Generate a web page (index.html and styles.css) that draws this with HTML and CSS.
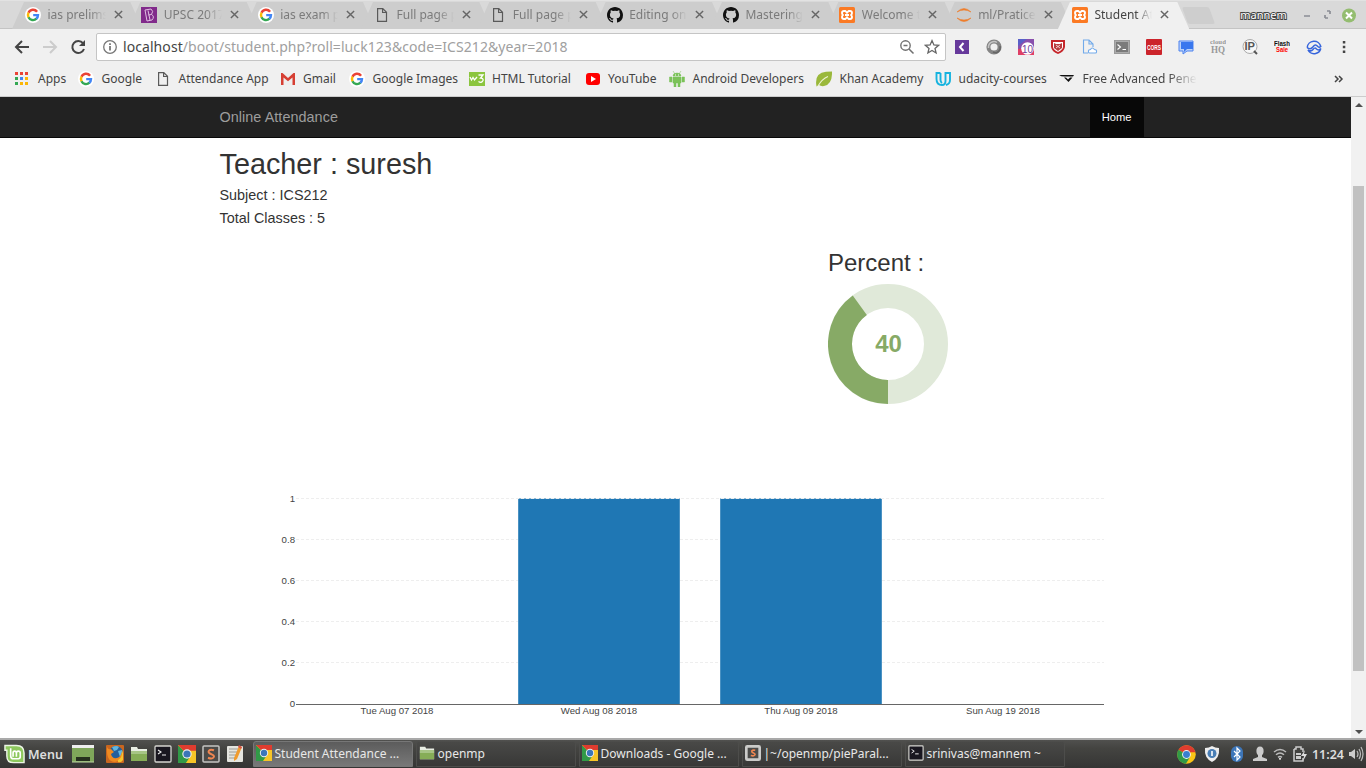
FILE: index.html
```html
<!DOCTYPE html>
<html lang="en">
<head>
<meta charset="utf-8">
<title>Student Attendance</title>
<link rel="stylesheet" href="styles.css">
</head>
<body>
<svg class="defs" width="0" height="0" aria-hidden="true">
  <symbol id="google" viewBox="0 0 16 16"><circle cx="8" cy="8" r="8" fill="#fff"/><g fill="none" stroke-width="2.4"><path d="M12.1 4.7A5 5 0 0 0 3.5 5.8" stroke="#ea4335"/><path d="M3.6 5.6a5 5 0 0 0 0 4.8" stroke="#fbbc05"/><path d="M3.5 10.2a5 5 0 0 0 8 1.5" stroke="#34a853"/><path d="M8.2 8.1H13a5 5 0 0 1-1.7 3.8" stroke="#4285f4"/></g></symbol>
  <symbol id="page" viewBox="0 0 16 16"><path d="M3.600 1.600h5.200l3.700 3.700v9.100H3.600zM8.600 1.800v3.700h3.800" fill="none" stroke="#5a5a5a" stroke-width="1.200"/></symbol>
  <symbol id="github" viewBox="0 0 16 16"><path fill="#111" fill-rule="evenodd" d="M8 0C3.58 0 0 3.58 0 8c0 3.54 2.29 6.53 5.47 7.59.4.07.55-.17.55-.38v-1.5c-2.01.37-2.53-.49-2.69-.94-.09-.23-.48-.94-.82-1.13-.28-.15-.68-.52-.01-.53.63-.01 1.08.58 1.23.82.72 1.21 1.87.87 2.33.66.07-.52.28-.87.51-1.07-1.78-.2-3.64-.89-3.64-3.95 0-.87.31-1.59.82-2.15-.08-.2-.36-1.02.08-2.12 0 0 .67-.21 2.2.82a7.6 7.6 0 0 1 4 0c1.53-1.04 2.2-.82 2.2-.82.44 1.1.16 1.92.08 2.12.51.56.82 1.27.82 2.15 0 3.07-1.87 3.75-3.65 3.95.29.25.54.73.54 1.48v2.2c0 .21.15.46.55.38A8 8 0 0 0 16 8c0-4.42-3.58-8-8-8z"/></symbol>
  <symbol id="xampp" viewBox="0 0 16 16"><rect width="16" height="16" rx="1.5" fill="#fb7a24"/><path d="M5 4h1.500L8 5.800 9.500 4H11q2 0 2 2 0 1.200-1 2 1 .8 1 2 0 2-2 2H9.500L8 10.200 6.500 12H5q-2 0-2-2 0-1.200 1-2-1-.8-1-2 0-2 2-2zM6 8h4" fill="none" stroke="#fff" stroke-width="1.900" stroke-linejoin="round"/></symbol>
  <symbol id="chrome" viewBox="0 0 16 16"><circle cx="8" cy="8" r="7.800" fill="#fbc516"/><path d="M8 8 1.200 4.100A7.800 7.800 0 0 1 14.800 4.200z" fill="#df3c2f"/><path d="M8 8 1.200 4.100A7.800 7.800 0 0 0 7.500 15.800l3.700-6.100z" fill="#319a47"/><path d="M8 4.200h6.800l.8 2H8z" fill="#df3c2f"/><circle cx="8" cy="8" r="3.700" fill="#f3f3f3"/><circle cx="8" cy="8" r="2.900" fill="#397fd0"/></symbol>
  <symbol id="chromesq" viewBox="0 0 16 16"><path d="M0 0h16v16H0z" fill="#f7c527"/><path d="m0 0 8 8 3 2-4 6H0z" fill="#319a47"/><path d="M0 0h16v5H8v3z" fill="#df3c2f"/><circle cx="8" cy="8" r="4.200" fill="#eee"/><circle cx="8" cy="8" r="3.200" fill="#3b76b8"/></symbol>
  <symbol id="folder" viewBox="0 0 18 16"><path d="M1 1h6l1 2h9v12H1z" fill="#e9eee4"/><path d="M1 5h16v10H1z" fill="#86ad57"/><path d="M1 5h16v3H1z" fill="#a7c586"/></symbol>
  <symbol id="term" viewBox="0 0 18 18"><rect x="1" y="1" width="16" height="16" rx="1" fill="#191720" stroke="#d5d5d0" stroke-width="1.300"/><path d="m4 5 3 2-3 2m4 1h4" fill="none" stroke="#eee" stroke-width="1.100"/></symbol>
  <symbol id="sublime" viewBox="0 0 18 18"><rect x="1" y="1" width="16" height="16" rx="1" fill="#4b4b49" stroke="#c5c5c2" stroke-width="1.500"/><path d="M12 5.300C7 3.500 5 7 8 8.500s5 2 3.500 4-4 .8-5.500.3" fill="none" stroke="#ef8651" stroke-width="2"/></symbol>
  <symbol id="sublimeframe" viewBox="0 0 18 18"><rect x="1.500" y="1.500" width="15" height="15" rx="1" fill="#4b4b49" stroke="#cbcbc9" stroke-width="3"/><path d="M11.500 6C7.500 5 6.500 7.500 9 8.700s3 2 1.500 3-2.500.5-4 0" fill="none" stroke="#ef8651" stroke-width="1.800"/></symbol>
  <symbol id="close" viewBox="0 0 10 10"><path d="m1 1 8 8M9 1 1 9" stroke="#666" stroke-width="1.600"/></symbol>
</svg>

<header class="tabs">
  <div class="tab"><svg><use href="#google"/></svg><span>ias prelims</span><svg class="x"><use href="#close"/></svg></div>
  <div class="tab"><svg viewBox="0 0 16 16"><path fill="#812a8b" d="M0 0h16v16H0z"/><path d="m4 3 6-1q3 2 .5 5.500 3.500 2 .5 5.500l-5 1zm3 .5 2 9.500M7.500 8l3-.5" fill="none" stroke="#e0bfe3"/></svg><span>UPSC 2017</span><svg class="x"><use href="#close"/></svg></div>
  <div class="tab"><svg><use href="#google"/></svg><span>ias exam pa</span><svg class="x"><use href="#close"/></svg></div>
  <div class="tab"><svg><use href="#page"/></svg><span>Full page pa</span><svg class="x"><use href="#close"/></svg></div>
  <div class="tab"><svg><use href="#page"/></svg><span>Full page pa</span><svg class="x"><use href="#close"/></svg></div>
  <div class="tab"><svg><use href="#github"/></svg><span>Editing onlin</span><svg class="x"><use href="#close"/></svg></div>
  <div class="tab"><svg><use href="#github"/></svg><span>Mastering</span><svg class="x"><use href="#close"/></svg></div>
  <div class="tab"><svg><use href="#xampp"/></svg><span>Welcome to</span><svg class="x"><use href="#close"/></svg></div>
  <div class="tab"><svg viewBox="0 0 16 16"><path d="M1 5q7-7 14 0Q8 1 1 5zM1 11q7 7 14 0-7 4-14 0z" fill="#ef7d2c" stroke="#ef7d2c" stroke-width=".6"/></svg><span>ml/Pratice</span><svg class="x"><use href="#close"/></svg></div>
  <div class="tab active"><svg><use href="#xampp"/></svg><span>Student Att</span><svg class="x"><use href="#close"/></svg></div>
  <i class="newtab"></i>
  <b class="user">mannem</b>
  <svg class="winbtns" viewBox="0 0 64 18"><path d="M4 10h6M25 12V9m0 3h3m2-7h-3m3 0v3" stroke="#8b8d95" stroke-width="1.700" fill="none"/><circle cx="49" cy="9.500" r="7" fill="#94bd70"/><path d="m46 6.500 6 6m0-6-6 6" stroke="#fff" stroke-width="2"/></svg>
</header>

<section class="toolbar">
  <svg class="nav" viewBox="0 0 80 18"><path d="M15 9H2m6-6L2 9l6 6" fill="none" stroke="#444" stroke-width="2"/><path d="M29 9h13m-6-6 6 6-6 6" fill="none" stroke="#ccc" stroke-width="2"/><path d="M69 5.200A6 6 0 1 0 70 11" fill="none" stroke="#444" stroke-width="2"/><path d="M71 2v6h-6z" fill="#444"/></svg>
  <div class="omni">
    <svg class="i16" viewBox="0 0 16 16"><circle cx="8" cy="8" r="6.300" fill="none" stroke="#777" stroke-width="1.300"/><path d="M8 7v4.500M8 4.200v1.700" stroke="#666" stroke-width="1.600"/></svg>
    <span class="url"><em>localhost</em>/boot/student.php?roll=luck123&amp;code=ICS212&amp;year=2018</span>
    <svg class="i16" viewBox="0 0 16 16"><circle cx="6.500" cy="6.500" r="4.700" fill="none" stroke="#707070" stroke-width="1.400"/><path d="m10 10 4.500 4.500M4.500 6.500h4" stroke="#707070" stroke-width="1.500"/></svg>
    <svg class="i16 star" viewBox="0 0 16 16"><path d="m8 1.600 1.900 4.300 4.700.4-3.600 3.100 1.100 4.600L8 11.500 3.900 14 5 9.400 1.400 6.300l4.700-.4z" fill="none" stroke="#666" stroke-width="1.300"/></svg>
  </div>
  <div class="exts">
    <svg viewBox="0 0 16 16"><path d="M1 1h14v14H1z" fill="#66399b"/><path d="M9.500 4 6 8l3.500 4" fill="none" stroke="#fff" stroke-width="2"/></svg>
    <svg viewBox="0 0 16 16"><circle cx="8" cy="8" r="5.600" fill="none" stroke="#858585" stroke-width="4"/><path d="M2.500 9C2 3 8 1.500 11 3.500" fill="none" stroke="#c4c4c4" stroke-width="1.500"/><path d="M14 7c1 5-3 8-7 6" fill="none" stroke="#666" stroke-width="1.500"/></svg>
    <svg viewBox="0 0 16 16"><path d="M0 0h16v16H0z" fill="#8950ad"/><path d="M0 10v6h16V8z" fill="#df3f66"/><path d="M0 0h9L0 7z" fill="#5960c8"/><circle cx="9.500" cy="9.500" r="6.300" fill="#fff"/><text x="4" y="13.500" class="ten" textLength="11" lengthAdjust="spacingAndGlyphs">10</text></svg>
    <svg viewBox="0 0 16 16"><path d="M1 1h14v7q-1 5-7 7-6-2-7-7z" fill="#c6262b"/><path d="M3 3h10v5q-.5 3-5 5-4.500-2-5-5z" fill="#fff"/><path d="m4 4 2 1h4l2-1v5l-4 3-4-3z" fill="#b73e40"/><path d="m6 6 4 3m0-3L6 9" stroke="#f4caca"/></svg>
    <svg viewBox="0 0 16 16"><path d="M6 14H1.500V1H7l4 4v3M7 1v4h4" fill="none" stroke="#72aaea" stroke-width="1.100"/><path d="M6.500 13q-.5-2.500 2-2.500 1.500-3 4 0 2.500 0 2 2.500 0 1-1 1h-6q-1 0-1-1z" fill="#fff" stroke="#72aaea" stroke-width="1.100"/></svg>
    <svg viewBox="0 0 16 16"><path d="M0 1h16v14H0z" fill="#9a9a9a"/><path d="M1.500 2.500h13v11h-13z" fill="#7b7b7b" stroke="#ccc" stroke-width=".5"/><path d="m3.500 5.500 3 2.500-3 2.500m5 0h3.500" fill="none" stroke="#fff" stroke-width="1.100"/></svg>
    <svg viewBox="0 0 16 16"><rect width="16" height="16" rx="1" fill="#cc242b"/><text x="1" y="10.700" class="cors" textLength="14" lengthAdjust="spacingAndGlyphs">CORS</text></svg>
    <svg viewBox="0 0 16 16"><path d="M1 2h14v10H9l-4 3v-3H1z" fill="#b9d1fa" stroke="#4c82ef"/><path d="M3 3h12v7H9l-3 3v-3H3z" fill="#3977ee"/></svg>
    <svg viewBox="0 0 16 16"><text x="0" y="5" class="cloud" textLength="16" lengthAdjust="spacingAndGlyphs">cloud</text><text x="1" y="14" class="hq" textLength="14" lengthAdjust="spacingAndGlyphs">HQ</text></svg>
    <svg viewBox="0 0 16 16"><circle cx="8" cy="7.500" r="7" fill="#f7f7f7" stroke="#aaa"/><path d="m12 12 3 3" stroke="#555" stroke-width="2"/><text x="2.500" y="11" class="ip" textLength="10.500" lengthAdjust="spacingAndGlyphs">IP</text></svg>
    <svg viewBox="0 0 16 16"><text y="6.500" class="flash" textLength="16" lengthAdjust="spacingAndGlyphs">Flash</text><text x="2" y="13" class="sale" textLength="12" lengthAdjust="spacingAndGlyphs">Sale</text></svg>
    <svg viewBox="0 0 16 16"><path d="M1.200 8.500A6.900 6.900 0 0 1 14.800 7.500q-1.500 1.500-3 0-2.500-3-4.500 0-3 4-6.100 1M14.800 9.500q-2.300 2.500-4.300.5-1.700-2-3.500.5-2 2.500-5 .5a6.900 6.900 0 0 0 12.800-1.500z" fill="none" stroke="#3765dc" stroke-width="1.500"/></svg>
    <svg class="menu" viewBox="0 0 16 16"><path d="M6.800 2h2.500v2.500H6.800zm0 4.800h2.500v2.500H6.800zm0 4.800h2.500v2.500H6.800z" fill="#444"/></svg>
  </div>
</section>

<nav class="bookmarks">
  <a><svg viewBox="0 0 16 16"><path d="M1 1h3v3H1zm5 0h3v3H6zm5 0h3v3h-3z" fill="#ea4335"/><path d="M1 6h3v3H1zm0 5h3v3H1z" fill="#34a853"/><path d="M6 6h3v3H6z" fill="#4285f4"/><path d="M11 6h3v3h-3zm-5 5h3v3H6zm5 0h3v3h-3z" fill="#fbb605"/></svg>Apps</a>
  <a><svg><use href="#google"/></svg>Google</a>
  <a><svg><use href="#page"/></svg>Attendance App</a>
  <a><svg viewBox="0 0 16 16"><path d="M1 2h14v12H1z" fill="#eee"/><path d="M1 14V2h1.500L8 7l5.500-5H15v12h-2.500V6.500L8 10.300 3.500 6.500V14z" fill="#d63f33"/></svg>Gmail</a>
  <a><svg><use href="#google"/></svg>Google Images</a>
  <a><svg viewBox="0 0 16 16"><path d="M0 1h16v14H0z" fill="#8bc53f"/><path d="m1 6 1.500 3L4 6.500 5.500 9 8 6m1.500-2H14l-2.500 3q3 0 2.500 2.500-1.500 3-4.500 1" fill="none" stroke="#fff" stroke-width="1.300"/></svg>HTML Tutorial</a>
  <a><svg viewBox="0 0 16 16"><rect x="1" y="2" width="14" height="12" rx="3" fill="#f00"/><path d="m6 5 5 3-5 3z" fill="#fff"/></svg>YouTube</a>
  <a><svg viewBox="0 0 16 16"><path d="M4 5q0-3 4-3t4 3zM4 6h8v6H4zM.5 6H3v5H.500zM13 6h2.500v5H13zM5 12h2v4H5zm4 0h2v4H9zM4 0l2 3m6-3-2 3" fill="#7bc258" stroke="#7bc258" stroke-width=".5"/><path d="M6 4h1m2 0h1" stroke="#fff"/></svg>Android Developers</a>
  <a><svg viewBox="0 0 16 16"><path d="M.5 15.500Q-2 2 10 .8L16 .5q.5 13-8 14.500-3 .5-5-1z" fill="#9ab83b"/><path d="M2 15Q6 8 12 5.500" fill="none" stroke="#eef3d3" stroke-width="1.100"/></svg>Khan Academy</a>
  <a><svg viewBox="0 0 16 16"><path d="M5.500 2h-4v6q0 6 5.500 6 3.500 0 3.500-4V2h4.500v7q0 4-4 5M5.500 2v7q0 2 1.500 3" fill="none" stroke="#16b3df" stroke-width="1.900"/></svg>udacity-courses</a>
  <a class="last"><svg viewBox="0 0 16 16"><path d="M0 4h15l-1 1.500H5.500Q2 5.500 0 4zm5 2.500h2l2 2 2-2h2.500L9.500 11 7.500 9z" fill="#111"/></svg><span>Free Advanced Penet</span></a>
  <svg class="more" viewBox="0 0 10 8"><path d="m1 1 3 3-3 3m4-6 3 3-3 3" fill="none" stroke="#444" stroke-width="1.500"/></svg>
</nav>

<main class="view">
  <div class="page">
    <div class="navbar"><div class="container"><span class="brand">Online Attendance</span><span class="home">Home</span></div></div>
    <div class="container body">
      <div class="info">
        <h1>Teacher : suresh</h1>
        <p>Subject : ICS212</p>
        <p>Total Classes : 5</p>
      </div>
      <div class="percent">
        <h3>Percent :</h3>
        <svg class="donut" viewBox="0 0 120 120"><circle cx="60" cy="60" r="48" fill="none" stroke="#e0e9d9" stroke-width="24"/><path d="M60 108A48 48 0 0 1 31.800 21.170" fill="none" stroke="#87aa66" stroke-width="24"/><text x="60.500" y="68" text-anchor="middle">40</text></svg>
      </div>
      <svg class="chart" viewBox="0 0 864 240">
        <g fill="#1f77b4"><path d="M258.200 18.500h161.600v205.500H258.200zM460.200 18.500h161.600v205.500H460.200z"/></g>
        <g stroke="#eee" stroke-dasharray="3 2"><path d="M36 18.500h808M36 59.500h222m162 0h40m162 0h222M36 100.500h222m162 0h40m162 0h222M36 141.500h222m162 0h40m162 0h222M36 182.500h222m162 0h40m162 0h222"/></g>
        <path d="M36 224.500h808" stroke="#666"/>
        <g text-anchor="end"><text x="35" y="22">1</text><text x="35" y="63">0.8</text><text x="35" y="104">0.6</text><text x="35" y="145">0.4</text><text x="35" y="186">0.2</text><text x="35" y="227">0</text></g>
        <g text-anchor="middle"><text x="137" y="234">Tue Aug 07 2018</text><text x="339" y="234">Wed Aug 08 2018</text><text x="541" y="234">Thu Aug 09 2018</text><text x="743" y="234">Sun Aug 19 2018</text></g>
      </svg>
    </div>
  </div>
  <aside class="scroll"><i class="up"></i><i class="thumb"></i><i class="down"></i></aside>
</main>

<footer class="taskbar">
  <svg class="mint" viewBox="0 0 22 20"><path d="M1 1h12q8 0 8 8v10H10q-7 0-7-7V6H1z" fill="#8ec85e" stroke="#edf5e6" stroke-width="1.500"/><path d="M7 4v8q0 3 3 3h5q2 0 2-2V9q0-2-2-2t-2 2v4M13 9q0-2-2-2-1.500 0-1.500 2v4" fill="none" stroke="#fff" stroke-width="1.700"/></svg>
  <b>Menu</b>
  <svg class="desk" viewBox="0 0 22 18"><path d="M0 0h22v17H0z" fill="#7fa65a"/><path d="M0 0h22v3H0z" fill="#eee"/><path d="M4 12h14v4H4z" fill="#26301e"/><path d="M0 17h22" stroke="#bdd5a4"/></svg>
  <div class="launch">
    <svg viewBox="0 0 18 18"><rect width="18" height="18" rx="1" fill="#c9661f"/><circle cx="10" cy="8" r="7" fill="#235f9c"/><path d="M6 2q5-2 7 0l-2 3-3 1zM12 6l4-1q1 4-2 7z" fill="#61b6df"/><path d="M1 2q1 3 4 2l3 3-3 2q1 5 6 4 4-1 5-7 2 10-7 11Q0 17 1 2z" fill="#ef8a20"/><path d="M12 15q4-2 4-7l1-3v10q-2 3-5 2z" fill="#f6c52e"/></svg>
    <svg><use href="#folder"/></svg>
    <svg><use href="#term"/></svg>
    <svg><use href="#chromesq"/></svg>
    <svg><use href="#sublime"/></svg>
    <svg viewBox="0 0 18 18"><rect x="1" y="1" width="16" height="16" rx="1" fill="#e5e5df"/><path d="M3 4h11M3 7h9M3 10h7M3 13h8" stroke="#9b9b96"/><path d="m13 1-5 12v3l3-2 5-12z" fill="#f09b2d"/><path d="m13 0 3 2-1 2-3-2z" fill="#d3554a"/></svg>
  </div>
  <div class="wins">
    <span class="on"><svg><use href="#chromesq"/></svg>Student Attendance ...</span>
    <span><svg><use href="#folder"/></svg>openmp</span>
    <span><svg><use href="#chromesq"/></svg>Downloads - Google ...</span>
    <span><svg><use href="#sublimeframe"/></svg>|~/openmp/pieParal...</span>
    <span><svg><use href="#term"/></svg>srinivas@mannem ~</span>
  </div>
  <div class="tray">
    <svg class="ch" viewBox="0 0 16 16"><use href="#chrome"/></svg>
    <svg viewBox="0 0 16 16"><path d="M8 0q3 2 7 2 1 10-7 14Q0 12 1 2q4 0 7-2z" fill="#eee"/><circle cx="8" cy="7.500" r="4.500" fill="#4a7fb6"/><path d="M8 5v5" stroke="#fff" stroke-width="1.600"/></svg>
    <svg class="bt" viewBox="0 0 16 16"><rect x="2" width="12" height="16" rx="6" fill="#3d76b9"/><path d="m5 5 6 6-3 3V2l3 3-6 6" fill="none" stroke="#fff" stroke-width="1.200"/></svg>
    <svg viewBox="0 0 16 16"><ellipse cx="8" cy="5" rx="3.600" ry="4.500" fill="#ccc"/><path d="M6 8h4v3l5 2v2H1v-2l5-2z" fill="#ccc"/></svg>
    <svg viewBox="0 0 16 16"><path d="M2 6q6-5 12 0M4 8.700q4-3.500 8 0M6 11.300q2-1.500 4 0" fill="none" stroke="#bbb" stroke-width="1.500"/><circle cx="8" cy="12.800" r="1.100" fill="#ddd"/></svg>
    <svg viewBox="0 0 16 16"><path d="M2 3h2V1h5v2h2v3M11 12v3H2V3" fill="none" stroke="#ccc" stroke-width="1.500"/><path d="M4 7h5v2H4zm0 3h5v3H4z" fill="#ccc"/><path d="m13 4-4 6h3l-1 5 4-7h-3z" fill="#ddd"/></svg>
    <b>11:24</b>
    <svg viewBox="0 0 16 16"><path d="M1 6h2l4-3v10l-4-3H1z" fill="#ccc"/><path d="M9 5q2 3 0 6m2-8q3 5 0 10m2-12q4 7 0 14" fill="none" stroke="#bbb" stroke-width="1.200"/></svg>
  </div>
</footer>
</body>
</html>
```

FILE: styles.css
```css
* { box-sizing: border-box; }
body { margin: 0; width: 1366px; height: 768px; overflow: hidden; display: flex; flex-direction: column; font: 12px "Noto Sans", sans-serif; color: #444; background: #fff; }
svg { display: block; flex: none; }
.defs { position: absolute; }

.tabs { height: 29px; flex: none; background: #d9d9d9; display: flex; padding-left: 17px; border-top: 1px solid #e2e2e2; border-bottom: 1px solid #c4c4c4; }
.tab { position: relative; z-index: 0; flex: none; width: 116.330px; height: 28px; padding: 0 0 1px 8px; display: flex; align-items: center; color: #7b7b7b; }
.tab::before { content: ""; position: absolute; z-index: -1; left: -5px; right: -9px; top: 1px; bottom: 0; background: #cdcdcd; clip-path: polygon(12px 0, calc(100% - 12px) 0, 100% 100%, 0 100%); }
.tab svg { width: 16px; height: 16px; }
.tab span { width: 58px; margin-left: 6.500px; overflow: hidden; white-space: nowrap; -webkit-mask-image: linear-gradient(90deg, #000 72%, transparent); mask-image: linear-gradient(90deg, #000 72%, transparent); }
.tab .x { width: 9px; height: 9px; margin-left: 8px; }
.tab.active { color: #444; }
.tab.active::before { background: #f0f0f0; left: -6px; }
.newtab { width: 27px; height: 17px; margin: 6px 0 0 5px; background: #cecece; transform: skewX(20deg); flex: none; border-radius: 2px; }
.user { margin: 5px 0 0 28px; width: 47px; flex: none; font-size: 11px; line-height: 17px; font-weight: 400; color: #fff; -webkit-text-stroke: 2px #444; paint-order: stroke fill; }
.winbtns { width: 64px; height: 18px; margin: 5px 0 0 13px; }

.toolbar { height: 34px; flex: none; background: #f0f0f0; display: flex; align-items: center; padding: 2px 0 0 14px; }
.nav { width: 80px; height: 18px; }
.omni { width: 850px; height: 28px; margin-left: 2px; background: #fff; border: 1px solid #c5c5c5; border-radius: 2px; display: flex; align-items: center; padding: 0 5px; }
.i16 { width: 16px; height: 16px; }
.url { flex: 1; margin-left: 5px; color: #a0a0a0; font-size: 14px; line-height: 20px; letter-spacing: .070px; white-space: nowrap; }
.url em { font-style: normal; color: #444; }
.star { margin-left: 9px; }
.exts { display: flex; gap: 16px; margin-left: 8px; }
.exts svg { width: 16px; height: 16px; }
.exts .menu { margin-left: -2px; }
.exts text { font-family: "Liberation Sans", sans-serif; font-weight: 700; }
.exts .ten { font-size: 10px; font-weight: 400; fill: #713d99; }
.exts .cors { font-size: 7.500px; fill: #fff; }
.exts .cloud { font: 700 6px "Liberation Serif", serif; fill: #999; }
.exts .hq { font: 700 10px "Liberation Serif", serif; fill: #999; }
.exts .ip { font-size: 10px; fill: #555; }
.exts .flash { font-size: 6.500px; fill: #111; }
.exts .sale { font-size: 6.500px; fill: #f00; }

.bookmarks { height: 34px; flex: none; background: #f0f0f0; border-bottom: 1px solid #ccc; display: grid; grid-template-columns: 64px 77px 124.500px 69.500px 119.500px 116px 84.500px 147px 119px 124px 140px; padding: 0 0 2px 14px; align-items: center; position: relative; }
.bookmarks a { display: flex; align-items: center; gap: 8px; white-space: nowrap; height: 20px; }
.bookmarks a:nth-child(n+2) { gap: 7.500px; }
.bookmarks a svg { width: 16px; height: 16px; }
.last span { width: 114px; overflow: hidden; -webkit-mask-image: linear-gradient(90deg, #000 75%, transparent); mask-image: linear-gradient(90deg, #000 75%, transparent); }
.bookmarks .more { position: absolute; right: 22px; top: 12px; width: 10px; height: 8px; }

.view { height: 641px; flex: none; display: flex; }
.page { width: 1351px; font-family: "Liberation Sans", Arial, sans-serif; color: #333; }
.navbar { height: 41px; background: #222; border-bottom: 1px solid #080808; }
.container { width: 936px; margin: 0 auto; padding: 0 12px; }
.navbar .container { display: flex; justify-content: space-between; height: 40px; line-height: 40px; }
.brand { font-size: 14.400px; letter-spacing: .050px; color: #9d9d9d; }
.home { font-size: 11.200px; color: #fff; background: #080808; padding: 0 12px; margin-right: -12px; }
.body { display: grid; grid-template-columns: 608.500px 1fr; grid-template-rows: 108px 234px 240px; }
.info { grid-column: 1 / 3; }
h1 { font-size: 28.800px; line-height: 32px; margin: 10px 0 7px; font-weight: 400; }
p { font-size: 14.400px; line-height: 16px; margin: 0 0 7px; }
.percent { grid-column: 2; }
h3 { font-size: 24px; line-height: 26px; margin: 4px 0 8px; font-weight: 400; }
.donut { width: 120px; height: 120px; }
.donut text { font-size: 24px; font-weight: 700; fill: #87aa66; }
.chart { grid-column: 1 / 3; width: 864px; height: 240px; margin-left: 40.500px; }
.chart text { font-size: 9.650px; fill: #444; }
.scroll { width: 15px; background: #f1f1f1; display: flex; flex-direction: column; align-items: center; padding: 6px 0 4px; }
.up { border: 4px solid transparent; border-top: 0; border-bottom: 4px solid #505050; }
.thumb { width: 11px; height: 485px; margin-top: 79px; background: #c1c1c1; }
.down { margin-top: auto; border: 4px solid transparent; border-bottom: 0; border-top: 4px solid #505050; }

.taskbar { height: 30px; flex: none; border-top: 2px solid #a9a9a9; background: linear-gradient(#50504e, #444441 30%, #353534); display: flex; align-items: center; color: #e8e8e8; padding-left: 4px; }
.taskbar b { font-size: 12.500px; font-weight: 600; color: #ddd; }
.mint { width: 21px; height: 20px; }
.mint + b { width: 40px; margin-left: 3px; }
.desk { width: 22px; height: 18px; margin-left: 4px; }
.launch { display: flex; gap: 6px; margin-left: 12px; }
.launch svg { width: 18px; height: 18px; }
.wins { display: flex; gap: 3px; margin-left: 9px; }
.wins span { width: 160px; height: 26px; display: flex; align-items: center; gap: 2.500px; padding: 0 3px 2px 2px; border: 1px solid #4d4d4b; border-radius: 3px 3px 0 0; background: linear-gradient(#494947, #383837); white-space: nowrap; }
.wins .on { background: linear-gradient(#5c5c5c, #787878); border-color: #777; }
.wins svg { width: 16px; height: 16px; }
.tray { display: flex; align-items: center; margin-left: auto; gap: 4px; padding-right: 2px; }
.tray svg { width: 16px; height: 16px; }
.tray .ch { width: 19px; height: 19px; margin-right: 4px; }
.tray .bt { margin: 0 3px 0 5px; }
```
